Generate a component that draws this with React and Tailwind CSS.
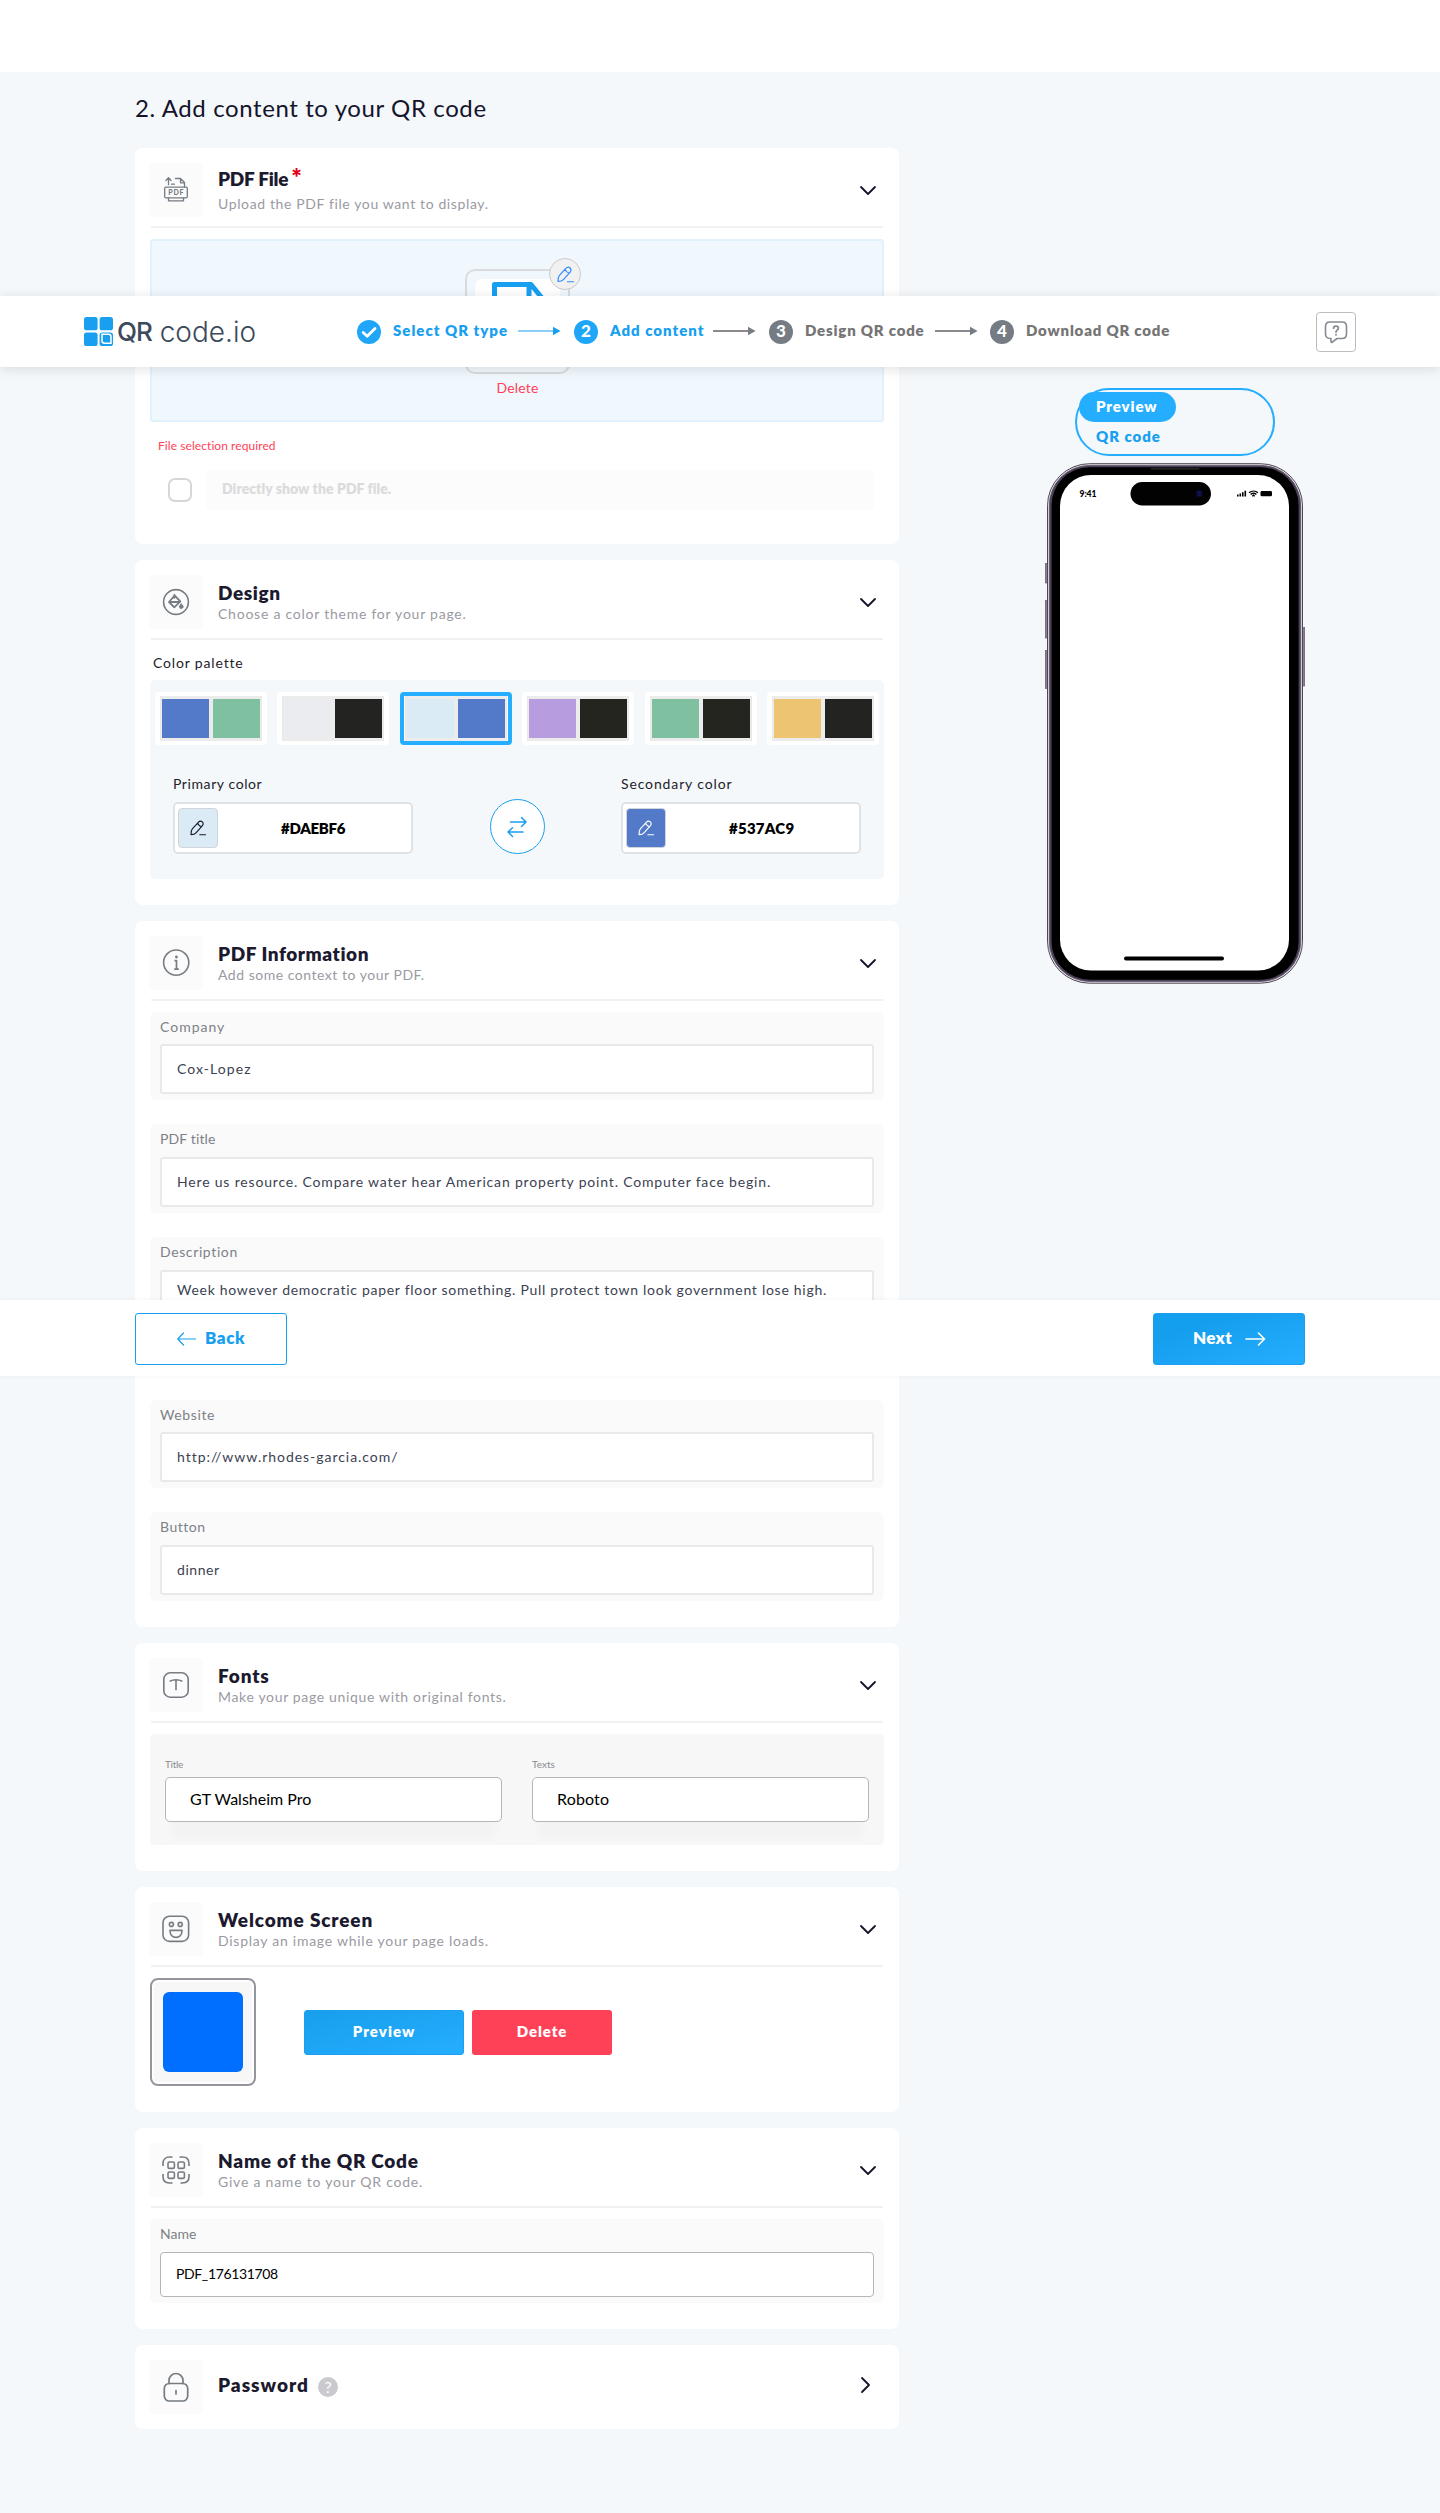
import React from "react";

/* ---------- icons ---------- */

function ChevronDown() {
  return (
    <svg width="18" height="12" viewBox="0 0 18 12" fill="none" stroke="#14142b" strokeWidth="1.8" strokeLinecap="round" strokeLinejoin="round">
      <path d="M2 2 9 9 16 2" />
    </svg>
  );
}

function ChevronRight() {
  return (
    <svg width="12" height="18" viewBox="0 0 12 18" fill="none" stroke="#14142b" strokeWidth="1.8" strokeLinecap="round" strokeLinejoin="round">
      <path d="M2 2 9 9 2 16" />
    </svg>
  );
}

function TileSvg({ children }) {
  return (
    <svg width="28" height="28" viewBox="0 0 28 28" fill="none" stroke="#767c84" strokeWidth="1.6" strokeLinecap="round" strokeLinejoin="round">
      {children}
    </svg>
  );
}

const pdfIcon = (
  <svg width="28" height="28" viewBox="0 0 28 28" fill="none" stroke="#767c84" strokeWidth="1.3" strokeLinecap="round" strokeLinejoin="round">
    <path d="M6.500 8.700V2M4 4.500 6.500 1.800 9 4.500M9.500 8.200h3" />
    <path d="M13.500 2.500h5l4 4v4.500M18.500 2.500v4.300h4" />
    <rect x="2.700" y="11.200" width="22.600" height="10.600" rx="1" />
    <path d="M6.500 21.800v3h15v-3" />
    <text x="14.300" y="19" textAnchor="middle" fontFamily="Lato, sans-serif" fontSize="7" fontWeight="900" letterSpacing="0.800" fill="#767c84" stroke="none">PDF</text>
  </svg>
);

const designIcon = (
  <TileSvg>
    <circle cx="14" cy="14" r="12.4" />
    <path d="M12.6 7.5 18.3 13.3 12.3 19.3 7 14Z M7.3 14H18 M12.3 9.8V7" strokeWidth="1.8" />
    <circle cx="19.3" cy="18.8" r="1.7" fill="#767c84" strokeWidth="1" />
    <path d="M18 17.6 19.3 15.6 20.6 17.6" strokeWidth="1" />
  </TileSvg>
);

const infoIcon = (
  <TileSvg>
    <circle cx="14.2" cy="13.6" r="12.6" />
    <circle cx="14.4" cy="8" r="1.4" fill="#767c84" stroke="none" />
    <path d="M12.4 11.6h2.1v8.6M12.2 20.2h4.6" strokeWidth="1.7" strokeLinecap="butt" />
  </TileSvg>
);

const fontIcon = (
  <TileSvg>
    <rect x="1.8" y="1.8" width="24.4" height="24.4" rx="6.5" />
    <path d="M7.6 10.2C11.5 8.4 16.5 8.4 20.4 10.2M14 9.2v10" strokeLinecap="butt" />
  </TileSvg>
);

const smileIcon = (
  <TileSvg>
    <rect x="1" y="1.2" width="25.6" height="25.2" rx="6.5" />
    <circle cx="9.4" cy="9.4" r="2" />
    <circle cx="18.2" cy="9.4" r="2" />
    <path d="M8 15.4h12c.2 4-2.200 7-6 7s-6.200-3-6-7Z" />
  </TileSvg>
);

const qrIcon = (
  <TileSvg>
    <path d="M1 10V7.500C1 3.500 3.500 1 7.500 1H10.500M17.500 1H20.500C24.500 1 27 3.500 27 7.500V10M1 18V20.500C1 24.500 3.500 27 7.500 27H10.500M18.500 27H20.500C24.500 27 27 24.500 27 20.500V18" strokeLinecap="butt" />
    <rect x="6" y="6" width="6.400" height="6.400" rx="1.500" />
    <rect x="16" y="6" width="6.400" height="6.400" rx="1.500" />
    <rect x="6" y="16" width="6.400" height="6.400" rx="1.500" />
    <rect x="16" y="16" width="6.400" height="6.400" rx="1.500" />
  </TileSvg>
);

const lockIcon = (
  <svg width="28" height="32" viewBox="0 0 28 32" fill="none" stroke="#767c84" strokeWidth="1.700" strokeLinecap="round" strokeLinejoin="round">
    <rect x="2.300" y="12.500" width="23.400" height="17.500" rx="5" />
    <path d="M7 12.500V9.500a7 7 0 0 1 14 0V12.500M14 19.500v3.500" />
  </svg>
);

function Pencil({ color, size }) {
  return (
    <svg width={size} height={size} viewBox="0 0 16 16" fill="none" stroke={color} strokeWidth="1.100" strokeLinecap="round" strokeLinejoin="round">
      <path d="M2.300 8.900 8.300 2.300C9.600 .9 11 .7 12.300 1.900 13.500 3.100 13.400 4.500 12.200 5.900L6 12.900C5 14 4 14.600 1 14.600 1 12 1.200 10.200 2.300 8.900ZM7.600 3.200C8.400 5 9.600 6.300 11.500 6.700M9.800 14.800H15.500" />
    </svg>
  );
}

function StepArrow({ line, head }) {
  return (
    <svg className="mb-[2px] shrink-0" width="43" height="10" viewBox="0 0 43 10">
      <path d="M0 5H36" stroke={line} strokeWidth="1.200" />
      <path d="M35 .8 42.600 5 35 9.200Z" fill={head} />
    </svg>
  );
}

function Phone() {
  return (
    <svg className="block" width="260" height="521" viewBox="0 0 260 521">
      <g fill="#8a7d94" stroke="#5c5166" strokeWidth=".6">
        <rect x=".3" y="100.500" width="3" height="19.500" />
        <rect x=".3" y="137.500" width="3" height="37.500" />
        <rect x=".3" y="187.500" width="3" height="38" />
        <rect x="256.700" y="164.500" width="3" height="58.500" />
      </g>
      <rect x="2.500" y=".7" width="255" height="519.500" rx="42" fill="#eae6ea" stroke="#4d4653" strokeWidth="1" />
      <rect x="4.300" y="2.400" width="251.400" height="516" rx="40" fill="#4a4058" stroke="#5b5167" strokeWidth=".8" />
      <rect x="6.600" y="4.200" width="247" height="512.500" rx="38" fill="#000" />
      <rect x="15" y="12" width="229" height="495.500" rx="31" fill="#fff" />
      <rect x="105.500" y="4.800" width="49" height="2" rx="1" fill="#222" />
      <rect x="85.500" y="19" width="80.500" height="23.500" rx="11.700" fill="#020202" />
      <circle cx="154.300" cy="30.700" r="3.600" fill="#0a0a30" />
      <path d="M152.800 29.300h3M152.800 32.100h3" stroke="#1c2a78" strokeWidth=".8" />
      <text x="34.500" y="33.500" fontFamily="Lato, sans-serif" fontWeight="900" fontSize="8.600" textLength="17" fill="#000">9:41</text>
      <g fill="#000">
        <rect x="192" y="31.500" width="1.600" height="2" />
        <rect x="194.500" y="30.500" width="1.600" height="3" />
        <rect x="197" y="29.200" width="1.600" height="4.300" />
        <rect x="199.500" y="27.700" width="1.600" height="5.800" />
        <rect x="215.500" y="28" width="11.500" height="5.300" rx="1.400" />
      </g>
      <g fill="none" stroke="#000" strokeWidth="1.300">
        <path d="M204 29.700C206.600 27.500 210.400 27.500 213 29.700M205.600 31.500C207.300 30 209.700 30 211.400 31.500" />
        <path d="M207.300 33.200 208.500 32.200 209.700 33.200" />
      </g>
      <rect x="79" y="493.500" width="100" height="4" rx="2" fill="#000" />
    </svg>
  );
}

/* ---------- shared blocks ---------- */

function Card({ icon, title, titleClass, subtitle, subClass, required, className, children }) {
  return (
    <section className={"rounded-lg bg-white " + className}>
      <div className="flex h-[78px] items-start pl-[14px] pr-[22px] pt-[15px]">
        <div className="flex size-[54px] shrink-0 items-center justify-center rounded bg-[#fbfbfb]">{icon}</div>
        <div className={"ml-[15px] flex-1 " + (required ? "pt-[4px]" : "pt-[6px]")}>
          <h2 className={"flex text-[19px] font-extrabold leading-[23px] text-[#1c1a2e] " + titleClass}>
            {title}
            {required && <span className="-mt-[3px] ml-[3px] text-[25px] leading-[24px] text-[#e3001b]">*</span>}
          </h2>
          <p className={"text-sm leading-5 text-[#9a9aa2] " + subClass + (required ? " mt-[4px]" : "")}>{subtitle}</p>
        </div>
        <div className="mt-[22px]"><ChevronDown /></div>
      </div>
      <div className="ml-4 mr-[16px] h-[2px] bg-[#f1f1f2]" />
      {children}
    </section>
  );
}

function Field({ label, labelClass, value, valueClass, className, boxClass }) {
  return (
    <div className={"flex flex-col justify-between rounded-md bg-[#fafafa] px-[10px] pb-[6px] pt-[5px] " + className}>
      <div className={"text-sm leading-5 text-[#7d8187] " + labelClass}>{label}</div>
      <div className={"rounded-[3px] border-2 border-[#e9e9e9] bg-white pl-[15px] text-sm leading-5 text-[#3b4252] " + boxClass}>
        <span className={"whitespace-nowrap " + valueClass}>{value}</span>
      </div>
    </div>
  );
}

const palettes = [
  ["bg-[#537ac9]", "bg-[#7fc0a1]"],
  ["bg-[#ebecf0]", "bg-[#232321]"],
  ["bg-[#daebf6]", "bg-[#537ac9]"],
  ["bg-[#b79ddf]", "bg-[#252520]"],
  ["bg-[#7fc0a1]", "bg-[#252520]"],
  ["bg-[#edc472]", "bg-[#232321]"],
];

function Palette({ colors, active }) {
  return (
    <div className={"flex h-[53px] w-[112px] items-center justify-center rounded-[4px] bg-white " + (active ? "border-4 border-[#25aeff]" : "")}>
      <div className="flex h-[45px] w-[102px] shrink-0 border-x border-[#e8e8e8] bg-[#ececec] px-px py-[3px]">
        <div className={"mr-1 h-full w-[47px] " + colors[0]} />
        <div className={"h-full w-[47px] " + colors[1]} />
      </div>
    </div>
  );
}

function ColorInput({ label, labelClass, value, valueClass, tile, pencil }) {
  return (
    <div className="w-[240px]">
      <div className={"text-sm leading-5 text-[#1e2229] " + labelClass}>{label}</div>
      <div className="mt-[8px] flex h-[52px] items-center rounded-[5px] border-2 border-[#dfe3e6] bg-white pl-[3px]">
        <div className={"flex size-10 items-center justify-center rounded border border-[#cfd5da] " + tile}>
          <Pencil color={pencil} size={16} />
        </div>
        <div className={"ml-[63px] text-[15px] font-extrabold text-black " + valueClass}>{value}</div>
      </div>
    </div>
  );
}

function FontSelect({ label, labelClass, value, valueClass }) {
  return (
    <div className="w-[337px]">
      <div className={"text-[10px] leading-[14px] text-[#888b90] " + labelClass}>{label}</div>
      <div className={"mt-[6px] flex h-[45px] items-center rounded-[5px] border border-[#b5b5b8] bg-white pb-px pl-6 text-base text-black shadow-[0_22px_10px_-6px_rgba(0,0,0,0.018)] " + valueClass}>{value}</div>
    </div>
  );
}

function Header() {
  return (
    <header className="absolute left-0 top-[296px] z-10 flex h-[71px] w-full items-center bg-white shadow-[0_2px_12px_rgba(0,0,0,0.12)]">
      <div className="flex w-[273px] items-center pl-[84px] font-[Inter] text-[#3c4a5c]">
        <svg width="29" height="29" viewBox="0 0 29 29" fill="#189ff0">
          <rect width="13.600" height="13.300" rx="2.600" />
          <rect x="15.600" width="13.400" height="13.300" rx="2.600" />
          <rect y="15.400" width="13.600" height="13.600" rx="2.600" />
          <rect x="15.600" y="15.400" width="13.400" height="13.600" rx="2.600" />
          <path d="M18 17.300H24.500C26 17.300 27 18.300 27 19.800V26.300H20.500C19 26.300 18 25.300 18 23.800Z" fill="none" stroke="#fff" strokeWidth="1.500" />
        </svg>
        <span className="ml-[4px] text-[26px] font-medium leading-8 tracking-[-1.1px]">QR</span>
        <span className="ml-[8px] whitespace-nowrap text-[28px] font-light leading-8 tracking-[0px]">code.io</span>
      </div>
      <nav className="ml-[84px] flex items-center whitespace-nowrap text-[15px] font-extrabold leading-5 text-[#757575]">
        <svg width="24" height="24" viewBox="0 0 24 24">
          <circle cx="12" cy="12" r="12" fill="#1fa6f8" />
          <path d="M6.200 12.500 10.200 16.200 18 8.600" fill="none" stroke="#fff" strokeWidth="2.800" strokeLinecap="round" strokeLinejoin="round" />
        </svg>
        <span className="ml-[12px] mr-[9px] w-[116px] pb-1 tracking-[1px] text-[#189ff0]">Select QR type</span>
        <StepArrow line="#189ff0" head="#189ff0" />
        <span className="ml-[13px] flex size-6 items-center justify-center rounded-full bg-[#1fa6f8] pb-px text-[17px] font-black text-white">2</span>
        <span className="ml-[12px] mr-[8px] w-[95px] pb-1 tracking-[1px] text-[#189ff0]">Add content</span>
        <StepArrow line="#1f1420" head="#767c84" />
        <span className="ml-[13px] flex size-6 items-center justify-center rounded-full bg-[#767c84] pb-px text-[17px] font-black text-white">3</span>
        <span className="ml-[12px] mr-[9px] w-[121px] pb-1 tracking-[0.8px]">Design QR code</span>
        <StepArrow line="#1f1420" head="#767c84" />
        <span className="ml-[12px] flex size-6 items-center justify-center rounded-full bg-[#767c84] pb-px text-[17px] font-black text-white">4</span>
        <span className="ml-[12px] w-[146px] pb-1 tracking-[0.8px]">Download QR code</span>
      </nav>
      <button className="ml-auto mr-[84px] flex size-10 items-center justify-center rounded-[4px] border border-[#bcbcbe]">
        <svg width="24" height="24" viewBox="0 0 24 24" fill="none" stroke="#858a93" strokeWidth="1.600" strokeLinecap="round" strokeLinejoin="round">
          <path d="M6 2H18C20.800 2 22.500 3.700 22.500 6.500V14C22.500 16.800 20.800 18.500 18 18.500H13L8 22.300C7.500 22.600 7 22.300 7 21.700V18.500H6C3.200 18.500 1.500 16.800 1.500 14V6.500C1.500 3.700 3.200 2 6 2Z" />
          <path d="M9.600 8.200C9.600 5.500 14.400 5.500 14.400 8.200 14.400 10 12 10.200 12 12M12 14.700v.2" strokeWidth="1.800" />
        </svg>
      </button>
    </header>
  );
}

function Footer() {
  return (
    <footer className="absolute left-0 top-[1300px] z-10 flex h-[76px] w-full items-start justify-between bg-white pl-[135px] pr-[135px] pt-[13px] shadow-[0_0_6px_rgba(0,0,0,0.05)]">
      <button className="flex h-[52px] w-[152px] items-center rounded-[3px] border border-[#189ff0] pl-[41px] text-[17px] font-extrabold text-[#189ff0]">
        <svg width="19" height="14" viewBox="0 0 19 14" fill="none" stroke="#189ff0" strokeWidth="1.200" strokeLinecap="round" strokeLinejoin="round">
          <path d="M18.500 7H.8M6.500 1 .8 7 6.500 13" />
        </svg>
        <span className="ml-[9px] pb-[3px] tracking-[0.6px]">Back</span>
      </button>
      <button className="flex h-[52px] w-[152px] items-center rounded-[3px] border border-[#1d9ff0] bg-gradient-to-br from-[#149eee] from-25% to-[#25aeff] pl-[39px] text-[17px] font-extrabold text-white">
        <span className="w-[39px] pb-[3px] tracking-[0.3px]">Next</span>
        <svg className="ml-[13px]" width="21" height="14" viewBox="0 0 21 14" fill="none" stroke="#fff" strokeWidth="1.600" strokeLinecap="round" strokeLinejoin="round">
          <path d="M1 7H19.500M13.500 1 19.500 7 13.500 13" />
        </svg>
      </button>
    </footer>
  );
}

/* ---------- page ---------- */

export default function App() {
  return (
    <div className="relative h-[2513px] w-[1440px] overflow-hidden bg-[#f4f8fb] font-[Lato,sans-serif]">
      <div className="h-[72px] bg-white" />
      <Header />
      <Footer />

      <div className="flex">
        <main className="ml-[135px] w-[764px]">
          <h1 className="h-[76px] pt-[20px] text-2xl leading-8 tracking-[0.6px] text-[#14142b]">2. Add content to your QR code</h1>

          <div className="flex flex-col gap-4">
            <Card icon={pdfIcon} title="PDF File" titleClass="tracking-[-0.25px]" subtitle="Upload the PDF file you want to display." subClass="tracking-[0.62px]" required className="h-[396px]">
              <div className="ml-[15px] mt-[11px] flex h-[183px] w-[734px] flex-col items-center rounded-[3px] border-2 border-[#e2f2fd] bg-[#f0f8fe] pl-[1px] pt-[28px]">
                <div className="relative h-[105px] w-[105px] rounded-[10px] border-2 border-[#d9dbe0] p-[8px]">
                  <div className="flex h-full justify-center rounded-[8px] bg-white pt-[3px]">
                    <svg width="52" height="62" viewBox="0 0 52 62" fill="none" stroke="#189ff0" strokeWidth="5" strokeLinejoin="round">
                      <path d="M2.500 2.500H39L50 16V59.500H2.500ZM37 2.500V17H50" />
                    </svg>
                  </div>
                  <div className="absolute -right-[13px] -top-[13px] flex size-8 items-center justify-center rounded-full border border-[#cbcbcd] bg-[#f1f1f1]">
                    <Pencil color="#2b8bff" size={17} />
                  </div>
                </div>
                <div className="mt-[4px] text-sm leading-5 tracking-[0.2px] text-[#ff4157]">Delete</div>
              </div>
              <div className="ml-[23px] mt-[14px] text-xs leading-5 tracking-[0.07px] text-[#ff4157]">File selection required</div>
              <div className="ml-[33px] mt-[14px] flex items-center">
                <div className="size-6 rounded-[7px] border-2 border-[#d6d6d8]" />
                <div className="ml-[14px] h-10 w-[668px] rounded bg-[#fcfcfc] pl-4 text-sm font-extrabold leading-[37px] tracking-[0.05px] text-[#dbdbdc]">Directly show the PDF file.</div>
              </div>
            </Card>

            <Card icon={designIcon} title="Design" titleClass="tracking-[0.6px]" subtitle="Choose a color theme for your page." subClass="tracking-[0.76px]" className="h-[345px]">
              <div className="ml-[18px] mt-[13px] text-sm leading-5 tracking-[0.84px] text-[#1e2229]">Color palette</div>
              <div className="ml-[15px] mt-[7px] h-[199px] w-[734px] rounded-[5px] bg-[#f4f8fb] pt-[12px]">
                <div className="flex justify-between px-[5px]">
                  {palettes.map((p, i) => (
                    <Palette key={i} colors={p} active={i === 2} />
                  ))}
                </div>
                <div className="mt-[29px] flex items-end justify-between pl-[23px] pr-[23px]">
                  <ColorInput label="Primary color" labelClass="tracking-[0.59px]" value="#DAEBF6" valueClass="tracking-[-0.3px]" tile="bg-[#daebf6]" pencil="#14142b" />
                  <div className="flex size-[55px] items-center justify-center rounded-full border border-[#189ff0] bg-white">
                    <svg width="20" height="22" viewBox="0 0 20 22" fill="none" stroke="#189ff0" strokeWidth="1.500" strokeLinecap="round" strokeLinejoin="round">
                      <path d="M3.500 6H19M14.500 1.500 19 6 14.500 10.500M16 16H1M5.500 11.800 1 16 5.500 20.500" />
                    </svg>
                  </div>
                  <ColorInput label="Secondary color" labelClass="tracking-[0.87px]" value="#537AC9" valueClass="tracking-[0.25px]" tile="bg-[#537ac9]" pencil="#ffffff" />
                </div>
              </div>
            </Card>

            <Card icon={infoIcon} title="PDF Information" titleClass="tracking-[0.55px]" subtitle="Add some context to your PDF." subClass="tracking-[0.52px]" className="h-[706px]">
              <div className="ml-[15px] mt-[11px] flex w-[734px] flex-col gap-6">
                <Field label="Company" labelClass="tracking-[1px]" value="Cox-Lopez" valueClass="tracking-[1.07px]" className="h-[88px]" boxClass="h-[50px] pt-[13px]" />
                <Field label="PDF title" labelClass="tracking-[0.14px]" value="Here us resource. Compare water hear American property point. Computer face begin." valueClass="tracking-[0.82px]" className="h-[89px]" boxClass="h-[50px] pt-[13px]" />
                <Field label="Description" labelClass="tracking-[0.62px]" value="Week however democratic paper floor something. Pull protect town look government lose high." valueClass="tracking-[0.72px]" className="h-[139px]" boxClass="h-[100px] pt-[8px]" />
                <Field label="Website" labelClass="tracking-[0.63px]" value="http://www.rhodes-garcia.com/" valueClass="tracking-[0.96px]" className="h-[88px]" boxClass="h-[50px] pt-[13px]" />
                <Field label="Button" labelClass="tracking-[0.5px]" value="dinner" valueClass="tracking-[0.54px]" className="h-[89px]" boxClass="h-[50px] pt-[13px]" />
              </div>
            </Card>

            <Card icon={fontIcon} title="Fonts" titleClass="tracking-[0.85px]" subtitle="Make your page unique with original fonts." subClass="tracking-[0.66px]" className="h-[228px]">
              <div className="ml-[15px] mt-[11px] flex h-[111px] w-[734px] justify-between rounded bg-[#f7f7f7] px-[15px] pt-[23px]">
                <FontSelect label="Title" labelClass="tracking-[-0.3px]" value="GT Walsheim Pro" valueClass="" />
                <FontSelect label="Texts" labelClass="" value="Roboto" valueClass="tracking-[0.15px]" />
              </div>
            </Card>

            <Card icon={smileIcon} title="Welcome Screen" titleClass="tracking-[0.85px]" subtitle="Display an image while your page loads." subClass="tracking-[0.74px]" className="h-[225px]">
              <div className="ml-[15px] mt-[11px] flex items-start">
                <div className="h-[108px] w-[106px] rounded-lg border-2 border-[#96949d] bg-white p-[2px]">
                  <div className="flex h-full items-center justify-center rounded-[4px] bg-[#f7f7f7]">
                    <div className="size-20 rounded-md bg-[#006eff]" />
                  </div>
                </div>
                <button className="ml-12 mt-8 h-[45px] w-40 rounded-[3px] border border-[#1d9ff0] bg-gradient-to-br from-[#179eec] to-[#25aeff] pb-[2px] text-[15px] font-extrabold tracking-[1.05px] text-white">Preview</button>
                <button className="ml-2 mt-8 h-[45px] w-[140px] rounded-[3px] bg-[#ff4157] pb-[2px] text-[15px] font-extrabold tracking-[0.9px] text-white">Delete</button>
              </div>
            </Card>

            <Card icon={qrIcon} title="Name of the QR Code" titleClass="tracking-[0.75px]" subtitle="Give a name to your QR code." subClass="tracking-[0.78px]" className="h-[201px]">
              <div className="ml-[15px] mt-[11px] h-[84px] w-[734px] rounded-md bg-[#fafafa] px-[10px] pt-[5px]">
                <div className="text-sm leading-5 tracking-[0.05px] text-[#7d8187]">Name</div>
                <div className="mt-[8px] flex h-[45px] items-center rounded-[4px] border border-[#b5b5b8] bg-white pb-px pl-[15px] text-sm leading-5 tracking-[-0.37px] text-black">PDF_176131708</div>
              </div>
            </Card>

            <section className="flex h-[84px] items-center rounded-lg bg-white pl-[14px] pr-[27px]">
              <div className="flex size-[54px] items-center justify-center rounded bg-[#fbfbfb]">{lockIcon}</div>
              <h2 className="ml-[15px] pb-[4px] text-[19px] font-extrabold leading-6 tracking-[1px] text-[#1c1a2e]">Password</h2>
              <span className="ml-[9px] flex size-5 items-center justify-center rounded-full bg-[#cacace] text-[16px] leading-5 text-white">?</span>
              <div className="ml-auto pb-[4px]"><ChevronRight /></div>
            </section>
          </div>
        </main>

        <aside className="ml-[146px] mt-[316px] w-[260px]">
          <div className="ml-[30px] h-[68px] w-[200px] rounded-[34px] border-2 border-[#25aeff] pl-[2px] pt-[2px] text-[15px] font-extrabold leading-[28px]">
            <div className="h-[30px] w-[97px] rounded-full bg-[#25aeff] pl-[17px] tracking-[0.9px] text-white">Preview</div>
            <div className="h-[30px] pl-[17px] tracking-[0.95px] text-[#189ff0]">QR code</div>
          </div>
          <div className="mt-[7px]"><Phone /></div>
        </aside>
      </div>
    </div>
  );
}
